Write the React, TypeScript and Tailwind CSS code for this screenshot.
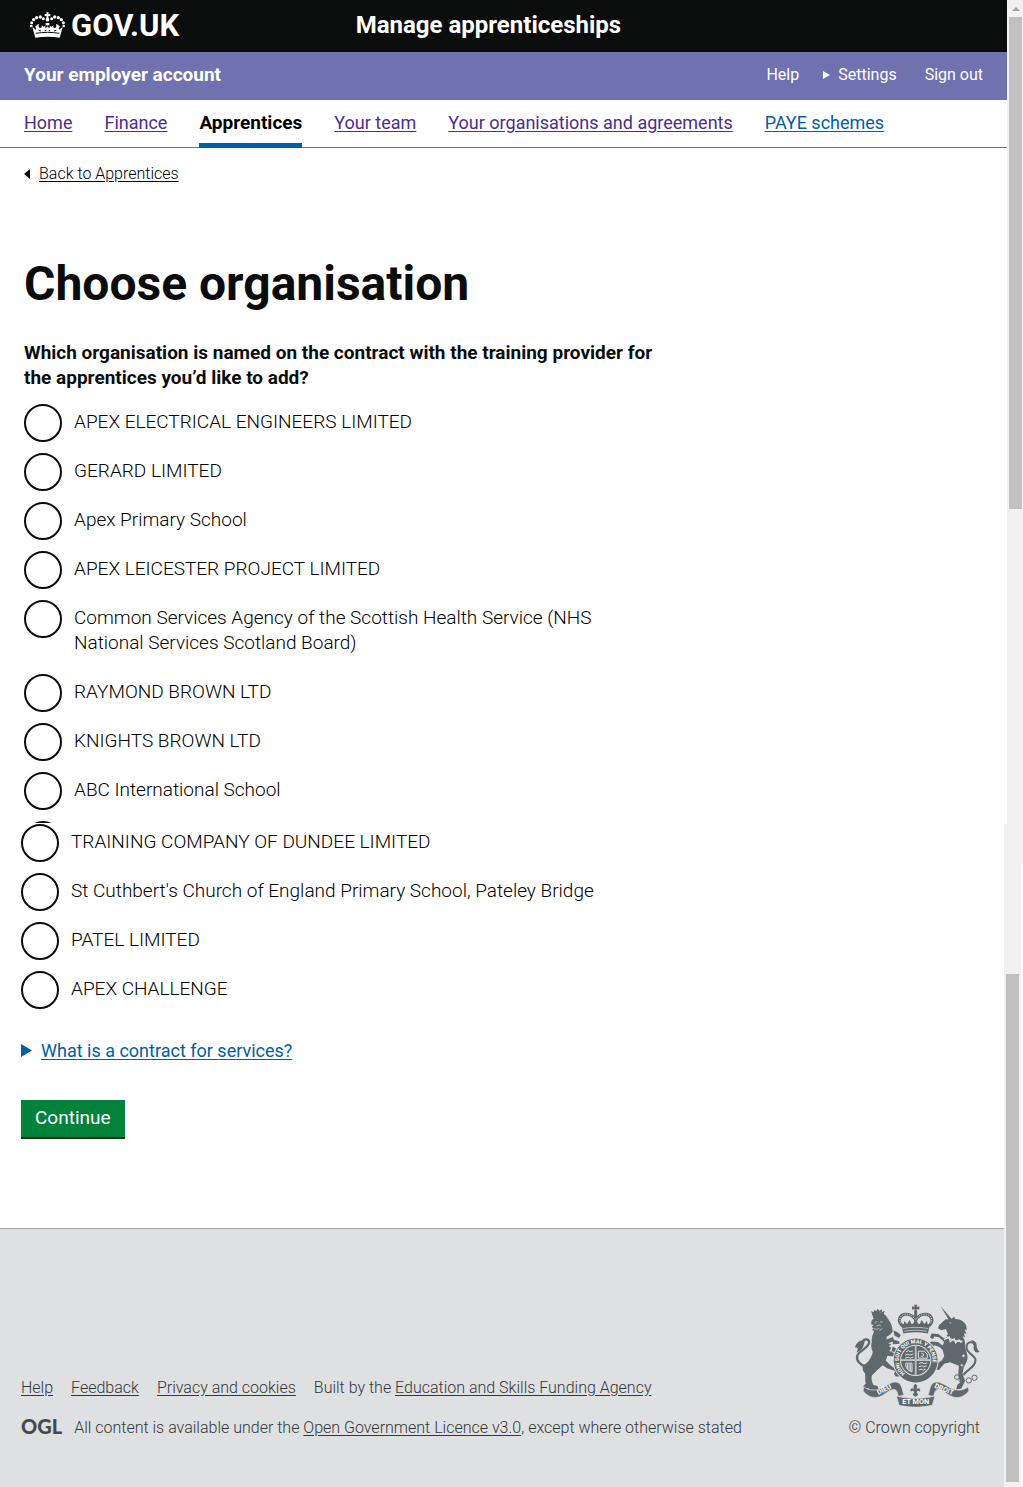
import type { ReactNode } from "react";

const navItems = [
  { label: "Home", visited: true },
  { label: "Finance", visited: true },
  { label: "Apprentices", current: true },
  { label: "Your team", visited: true },
  { label: "Your organisations and agreements", visited: true },
  { label: "PAYE schemes" },
];

const organisations = [
  "APEX ELECTRICAL ENGINEERS LIMITED",
  "GERARD LIMITED",
  "Apex Primary School",
  "APEX LEICESTER PROJECT LIMITED",
  "Common Services Agency of the Scottish Health Service (NHS National Services Scotland Board)",
  "RAYMOND BROWN LTD",
  "KNIGHTS BROWN LTD",
  "ABC International School",
];

const moreOrganisations = [
  "TRAINING COMPANY OF DUNDEE LIMITED",
  "St Cuthbert's Church of England Primary School, Pateley Bridge",
  "PATEL LIMITED",
  "APEX CHALLENGE",
];

function CrownLogo() {
  return (
    <svg viewBox="90 35 105 78" className="h-[26px] w-[35px]" fill="#fff" aria-hidden="true">
      <path d="M139 36h7l-1 6 6-1v7l-6-1 1 8h-7l1-8-6 1v-7l6 1z" />
      <circle cx="142.500" cy="58" r="5.500" />
      <circle cx="130" cy="55" r="4.500" />
      <circle cx="121" cy="50" r="5" />
      <circle cx="110" cy="52" r="5" />
      <circle cx="101" cy="58" r="5" />
      <circle cx="95" cy="67" r="4.500" />
      <circle cx="94" cy="77" r="4" />
      <circle cx="155" cy="55" r="4.500" />
      <circle cx="164" cy="50" r="5" />
      <circle cx="175" cy="52" r="5" />
      <circle cx="184" cy="58" r="5" />
      <circle cx="190" cy="67" r="4.500" />
      <circle cx="191" cy="77" r="4" />
      <path d="M97 80l11 8c1-4 0-7-3-9 3-4 8-7 12-8-2 6-1 10 3 13l5-3v-6l6 4 5-3v8l6-4v-5h-5v-7h11v7h-5v5l6 4v-8l5 3 6-4v6l5 3c4-3 5-7 3-13 4 1 9 4 12 8-3 2-4 5-3 9l11-8-9 32c-24-4-49-4-73 0z" />
      <path d="M107 99c24-4 47-4 71 0" fill="none" stroke="#0b0c0c" strokeWidth="3" />
      <path d="M116 90l7 2M162 92l7-2M134 91h5M146 91h5" fill="none" stroke="#0b0c0c" strokeWidth="3" />
    </svg>
  );
}

function CrestLion() {
  return (
    <g>
      <path d="M101 74l-4-13 7 4 3-8 5 5 5-8 5 7 7-6 1 9 8-4-4 14-3 8-27 1z" />
      <path d="M104 72c9-4 20-5 29-2M109 66v4M117 63v5M126 64v4" fill="none" stroke="#dee0e2" strokeWidth="2" />
      <path d="M105 84c-8 5-9 12-7 18l7 1-6 5 4 6-3 4 6 4c-4 10-9 20-7 32-3 11-2 20 3 30-2 12-8 21-14 30-6 6-13 9-17 14 0 9 2 15 8 22 1 11-1 20 2 30l-8 7 5 8 10-2 6 6 7-1 5 4 14-5-4-10-12-3c-5-9-7-19-5-29l20-19c5-5 8-8 12-12l16 10 22 8-3 9 5 7h12l7-8-4-10-12-1-19-15-14-14 5-14 21 2 3-8-18-9 6-9-8-5 8-6-10-3 18-6-3-13-20 8 1-9c8-3 14-8 18-16-1-16-7-28-15-38-4-9-10-14-18-17-10-5-22-5-30-1z" />
      <path d="M164 120c10 3 18 8 22 14l-5 8-14-7zM160 146l21 6 2 8-20 1zM162 168l14 8-4 9-14-3z" />
      <path d="M107 96l8-3M124 94l8 0M113 106l10-3 3 4M104 114c7 3 12 3 17-1M122 120l9-7" fill="none" stroke="#dee0e2" strokeWidth="2" />
      <path d="M82 228C62 224 52 209 55 196c4-14 35-24 36-40 0-11-14-12-19-5" fill="none" stroke="#5f696d" strokeWidth="7" />
      <path d="M79 148c-16 0-27 7-31 24 9-4 11 3 5 14 15-4 20-15 23-27z" />
    </g>
  );
}

function CrestUnicorn() {
  return (
    <g>
      <path d="M306 47l34 39-7 6z" />
      <path d="M335 87l12-9 3 7c18 0 28 9 33 20l2 14-7-3 6 14-8-3 4 13-8-3c7 10 9 22 8 33l6 22c4 13-3 27-10 37l-4 22 8 20-12 24-15 2 3-13 10-9-7-24 2-25-26-11-18 5-16 19-9-2-6 7-8-9 9-10 23-16 7-12-4-17-9-10-16-6-13 10-7-9 9-12 21 1 14 11 5-11-16-14-14-2-4 8-9-5 5-12 20 1 17 13 12-12-6-16-14 4-10-6 4-10 19-17z" />
      <path d="M319 135c17 13 33 18 53 17M322 129l-3 17 13-7 3 14 12-8 4 12 10-9 7 9" fill="none" stroke="#dee0e2" strokeWidth="4" />
      <path d="M332 96l7 2" fill="none" stroke="#dee0e2" strokeWidth="2" />
      <circle cx="375" cy="196" r="5" fill="#dee0e2" stroke="#5f696d" strokeWidth="2" />
      <circle cx="370" cy="224" r="4" fill="#dee0e2" stroke="#5f696d" strokeWidth="2" />
      <path d="M374 254c13-18 38-24 37-46-1-14-27-19-27-38 0-17 22-20 24-7" fill="none" stroke="#5f696d" strokeWidth="6" />
      <path d="M397 149c14 0 19 10 18 21 3 8 5 12 9 13-11 8-22-2-18-18z" />
      <g fill="none" stroke="#5f696d" strokeWidth="3">
        <circle cx="355" cy="260" r="7" />
        <circle cx="367" cy="268" r="6" />
        <circle cx="391" cy="270" r="8" />
        <circle cx="408" cy="262" r="8" />
      </g>
    </g>
  );
}

function CrestCrown() {
  return (
    <g>
      <path d="M226 42h10l-2 7 8-2v10l-8-2 2 10h-10l2-10-8 2V47l8 2z" />
      <g fill="none" stroke="#5f696d" strokeWidth="9">
        <path d="M191 106c-16-14-9-32 7-35 14-2 26 5 33 17 7-12 19-19 33-17 16 3 23 21 7 35" />
        <path d="M231 64v28" />
      </g>
      <path d="M191 104c-14-13-8-30 7-33 14-2 26 5 33 17 7-12 19-19 33-17 15 3 21 20 7 33" fill="none" stroke="#dee0e2" strokeWidth="3" strokeDasharray="3 4" />
      <path d="M190 111l-5-14 10 4 2-10 8 9 8-12 6 13 5-3 7-12 7 12 5 3 6-13 8 12 8-9 2 10 10-4-5 14-4 18c-25-5-49-5-74 0z" />
      <path d="M193 114c25-5 51-5 76 0M197 122c23-4 45-4 68 0" fill="none" stroke="#dee0e2" strokeWidth="2" />
    </g>
  );
}

function CrestShield() {
  return (
    <g>
      <circle cx="231" cy="210" r="69" fill="#dee0e2" />
      <circle cx="231" cy="210" r="66" />
      <circle cx="231" cy="210" r="47" fill="#dee0e2" />
      <circle cx="231" cy="210" r="44" />
      <path d="M231 166v88M187 209h88" stroke="#dee0e2" strokeWidth="5" />
      <path d="M231 166v88M187 209h88" stroke="#5f696d" strokeWidth="1" />
      <g fill="none" stroke="#dee0e2" strokeWidth="3">
        <path d="M202 184l7-4 5 4 9-3M199 194l9-3 6 3 10-4M199 203l10-3 6 3 9-3" />
        <path d="M241 219l9-3 6 4 10-3M240 229l9-3 6 3 10-3M240 239l8-3 6 3 7-3" />
        <path d="M239 182h18l9 9v12h-27zM248 188l8 4-5 8-4-5" />
        <path d="M201 218c-1 14 6 23 19 26V218zM206 220v15M211 220v20M216 220v22" />
      </g>
      <path id="garter" d="M199 249A51 51 0 1 1 263 249" fill="none" />
      <text fill="#fff" fontFamily="Roboto" fontSize="16" fontWeight="700">
        <textPath href="#garter">HONI SOIT QUI MAL Y PENSE</textPath>
      </text>
    </g>
  );
}

function CrestRibbon() {
  return (
    <g>
      <path d="M75 289c16 14 39 12 55 3 17-9 35-23 49-15 13 8 11 26 17 38l-17 3c-3-12-5-21-14-21-16 1-25 15-42 22-22 7-40-3-50-18z" stroke="#dee0e2" strokeWidth="2" />
      <path d="M389 289c-16 14-39 12-55 3-17-9-35-23-49-15-13 8-11 26-17 38l17 3c3-12 5-21 14-21 16 1 25 15 42 22 22 7 40-3 50-18z" stroke="#dee0e2" strokeWidth="2" />
      <path d="M173 317c38 10 78 10 116 0l-8 28c-34 7-67 7-100 0z" stroke="#dee0e2" strokeWidth="2" />
      <path d="M230 280c8 6 6 12 3 17 7-8 14-2 11 6l-7-2-3 4 5 8-9 7-8-7 5-8-4-4-7 2c-3-8 5-14 11-6-4-6-4-12 3-17z" />
      <text x="231" y="342" textAnchor="middle" fill="#fff" fontFamily="Roboto" fontSize="22" fontWeight="700">ET MON</text>
      <text transform="translate(119 314) rotate(-27)" fill="#fff" fontFamily="Roboto" fontSize="21" fontWeight="700">DIEU</text>
      <text transform="translate(286 291) rotate(23)" fill="#fff" fontFamily="Roboto" fontSize="21" fontWeight="700">DROIT</text>
    </g>
  );
}

function RoyalArms() {
  return (
    <svg viewBox="46 40 378 310" className="h-[103px] w-[126px]" fill="#5f696d" aria-hidden="true">
      <CrestLion />
      <CrestUnicorn />
      <CrestCrown />
      <CrestShield />
      <CrestRibbon />
    </svg>
  );
}

function OrganisationOption({ id, name }: { id: string; name: string }) {
  return (
    <div className="flex items-start gap-3">
      <input
        id={id}
        type="radio"
        name="organisation"
        className="size-[38px] shrink-0 appearance-none rounded-full border-2 border-[#0b0c0c] bg-white checked:border-[12px]"
      />
      <label htmlFor={id} className="pt-[5px] pb-[9px] text-[19px] leading-[25px] font-light text-black">
        {name}
      </label>
    </div>
  );
}

function FooterLink({ children }: { children: ReactNode }) {
  return (
    <a href="#" className="underline underline-offset-2">
      {children}
    </a>
  );
}

export default function App() {
  return (
    <div className="bg-white font-['Roboto',sans-serif] text-[#0b0c0c]">
      <div className="flex">
        <div className="min-w-0 flex-1">
          <header>
            <div className="flex h-[52px] items-center bg-[#0b0c0c] px-6 pb-[2px] text-white">
              <a href="#" className="flex w-1/3 items-center gap-[6px] pl-[6px]">
                <CrownLogo />
                <span className="pt-[2px] text-[31px] leading-8 font-bold">GOV.UK</span>
              </a>
              <a href="#" className="pl-3 text-2xl leading-7 font-bold">
                Manage apprenticeships
              </a>
            </div>
            <div className="flex h-12 items-center justify-between bg-[#6f72af] px-6 pb-[2px] text-white">
              <a href="#" className="text-[19px] font-bold">
                Your employer account
              </a>
              <div className="flex items-center text-base">
                <a href="#">Help</a>
                <button type="button" className="ml-6 flex items-center gap-2">
                  <svg viewBox="0 0 7 8" className="h-2 w-[7px]" fill="#fff" aria-hidden="true">
                    <path d="M0 0l7 4-7 4z" />
                  </svg>
                  Settings
                </button>
                <a href="#" className="ml-7">
                  Sign out
                </a>
              </div>
            </div>
          </header>
          <nav className="flex h-12 gap-8 border-b border-[#6f777b] px-6 text-lg leading-[46px] whitespace-nowrap">
            {navItems.map((item) =>
              item.current ? (
                <a
                  key={item.label}
                  href="#"
                  aria-current="page"
                  className="h-12 border-b-5 border-[#005ea5] text-[19px] leading-[46px] font-bold text-black"
                >
                  {item.label}
                </a>
              ) : (
                <a
                  key={item.label}
                  href="#"
                  className={
                    item.visited
                      ? "text-[#4c2c92] underline underline-offset-2"
                      : "text-[#005ea5] underline underline-offset-2"
                  }
                >
                  {item.label}
                </a>
              ),
            )}
          </nav>
          <main className="px-6">
            <a href="#" className="mt-4 flex items-center gap-[9px] text-base leading-5 text-black">
              <svg viewBox="0 0 6 10" className="h-[10px] w-[6px]" fill="#0b0c0c" aria-hidden="true">
                <path d="M6 0v10L0 5z" />
              </svg>
              <span className="font-light underline underline-offset-2">Back to Apprentices</span>
            </a>
            <h1 className="mt-[75px] text-5xl leading-[50px] font-bold">Choose organisation</h1>
            <fieldset className="mt-[31px] max-w-[632px]">
              <legend className="mb-[14px] text-[19px] leading-[25px] font-bold">
                Which organisation is named on the contract with the training provider for the apprentices you’d like to
                add?
              </legend>
              <div className="flex flex-col gap-[10px]">
                {organisations.map((name, i) => (
                  <OrganisationOption key={name} id={`org-${i}`} name={name} />
                ))}
                <div className="mb-px h-[2px] overflow-hidden" aria-hidden="true">
                  <div className="size-[38px] rounded-full border-2 border-[#0b0c0c]" />
                </div>
              </div>
            </fieldset>
          </main>
        </div>
        <div className="w-4 bg-[#f1f1f1] pl-[2px]" aria-hidden="true">
          <div className="flex h-[17px] w-[13px] items-center justify-center">
            <svg viewBox="0 0 8 4" className="h-1 w-2" fill="#a3a3a3">
              <path d="M0 4l4-4 4 4z" />
            </svg>
          </div>
          <div className="h-[492px] w-[13px] bg-[#c1c1c1]" />
        </div>
      </div>

      <div className="flex">
        <div className="min-w-0 flex-1">
          <section className="px-[21px]">
            <div className="flex flex-col gap-[10px]">
              {moreOrganisations.map((name, i) => (
                <OrganisationOption key={name} id={`more-org-${i}`} name={name} />
              ))}
            </div>
            <a href="#" className="mt-7 flex items-center gap-[9px] text-lg leading-[25px] text-[#005ea5]">
              <svg viewBox="0 0 11 13" className="h-[13px] w-[11px]" fill="#005ea5" aria-hidden="true">
                <path d="M0 0l11 6.500L0 13z" />
              </svg>
              <span className="underline underline-offset-2">What is a contract for services?</span>
            </a>
            <button
              type="button"
              className="mt-[37px] mb-[89px] h-[39px] border-b-2 border-[#003618] bg-[#00823b] px-[14px] text-[19px] text-white"
            >
              Continue
            </button>
          </section>
          <footer className="flex items-end justify-between border-t border-[#a1acb2] bg-[#dee0e2] pt-[75px] pr-6 pb-[49px] pl-[21px] text-base leading-5 font-light text-[#34383a]">
            <div>
              <div className="mb-5 flex gap-[18px]">
                <FooterLink>Help</FooterLink>
                <FooterLink>Feedback</FooterLink>
                <FooterLink>Privacy and cookies</FooterLink>
                <span>
                  Built by the <FooterLink>Education and Skills Funding Agency</FooterLink>
                </span>
              </div>
              <div className="flex gap-3">
                <span className="min-w-[41px] font-['Lato'] text-xl leading-4 font-black text-[#454a4d]">OGL</span>
                <span>
                  All content is available under the <FooterLink>Open Government Licence v3.0</FooterLink>, except where
                  otherwise stated
                </span>
              </div>
            </div>
            <div className="flex flex-col items-end gap-[11px]">
              <RoyalArms />
              <a href="#">© Crown copyright</a>
            </div>
          </footer>
        </div>
        <div className="flex w-[19px] flex-col" aria-hidden="true">
          <div className="h-10 bg-[#f1f1f1]" />
          <div className="mr-[2px] flex-1 bg-[#f1f1f1] pt-[110px] pl-[2px]">
            <div className="h-[508px] w-[13px] bg-[#c1c1c1]" />
          </div>
        </div>
      </div>
    </div>
  );
}
